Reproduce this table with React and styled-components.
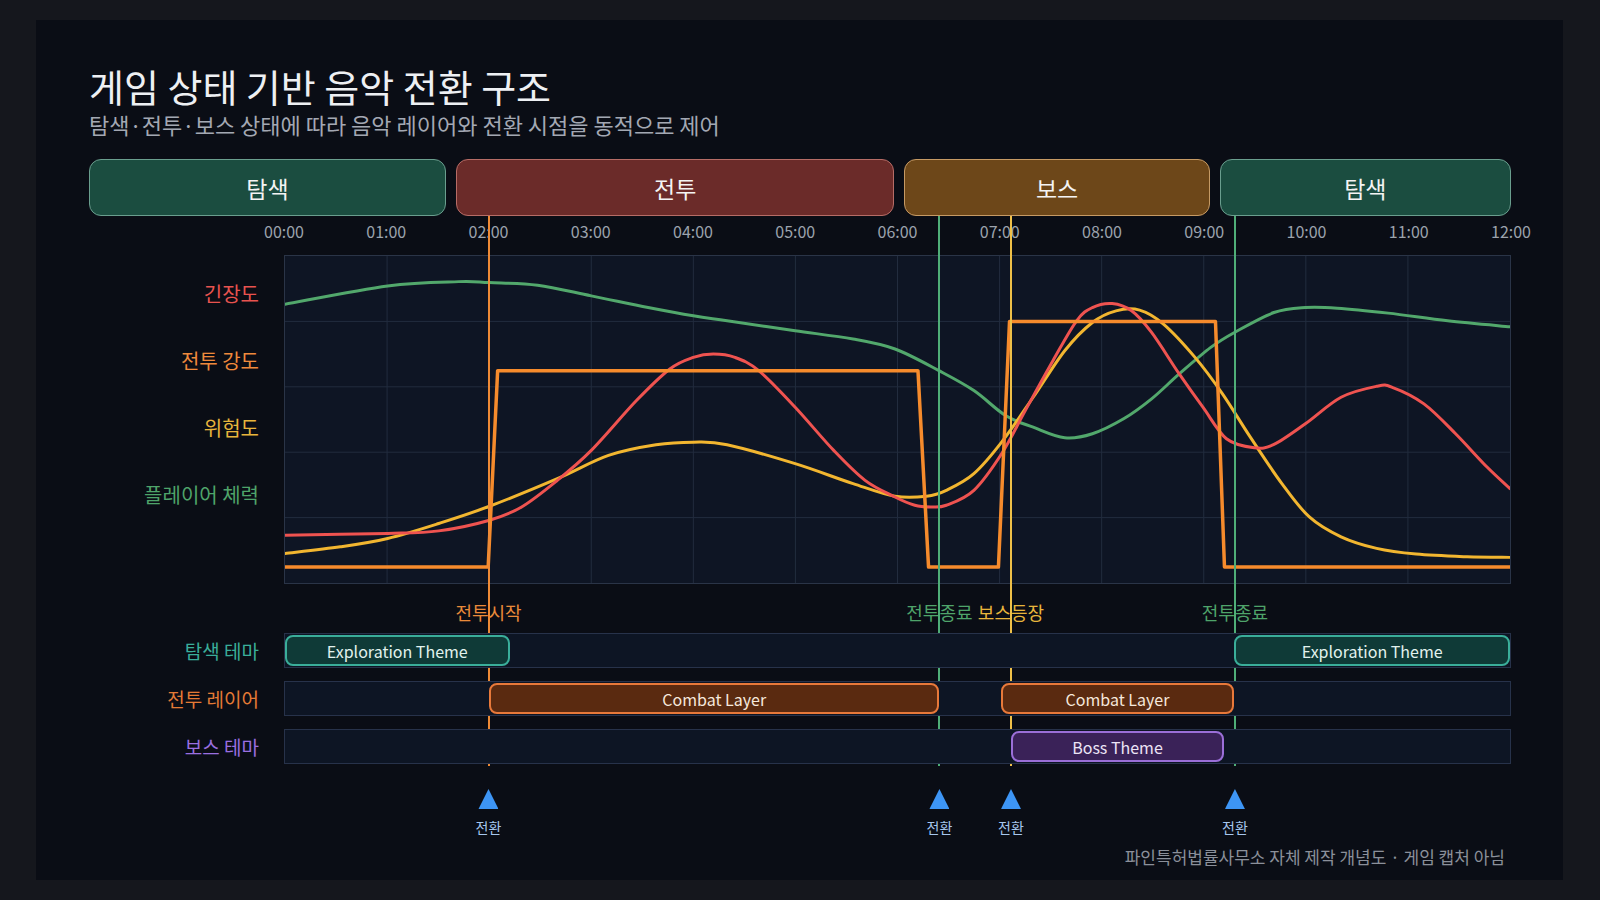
import React from "react";
import styled, { createGlobalStyle } from "styled-components";

// timeline spans 12 hours across the track
const HOURS = 12;
const PLOT_W = 1227;
const PLOT_H = 328;

const pct = (h) => `${(h / HOURS) * 100}%`;

const GlobalStyle = createGlobalStyle`
  html, body {
    margin: 0;
    padding: 0;
    background: #15171d;
  }
  body {
    font-family: "Noto Sans CJK KR", "Noto Sans", sans-serif;
  }
  * {
    box-sizing: border-box;
  }
`;

const tones = {
  explore: { bg: "#1b4d40", border: "#6a9e8e" },
  combat: { bg: "#6b2b29", border: "#b66c66" },
  boss: { bg: "#6d4719", border: "#c69a64" },
};

const blockTones = {
  explore: { bg: "#0f3a37", border: "#3aae9a", text: "#e2f2ee" },
  combat: { bg: "#5a2a10", border: "#e8793a", text: "#f6e8dc" },
  boss: { bg: "#3a2258", border: "#9b6fd8", text: "#ece4f6" },
};

const states = [
  { label: "탐색", grow: 357, tone: "explore" },
  { label: "전투", grow: 439, tone: "combat" },
  { label: "보스", grow: 305, tone: "boss" },
  { label: "탐색", grow: 291, tone: "explore" },
];

const yLabels = [
  { text: "긴장도", color: "#e8534f" },
  { text: "전투 강도", color: "#ef8a3c" },
  { text: "위험도", color: "#e8b53c" },
  { text: "플레이어 체력", color: "#4fa46a" },
];

// transition points (hours) with their marker colours
const markers = [
  { at: 2.0, color: "#ee8a36" },
  { at: 6.41, color: "#4fae78" },
  { at: 7.11, color: "#efc048" },
  { at: 9.3, color: "#4fae78" },
];

const events = [
  { at: 2.0, text: "전투시작", color: "#ea8a3a" },
  { at: 6.41, text: "전투종료", color: "#4fa46a" },
  { at: 7.11, text: "보스등장", color: "#e8b53c" },
  { at: 9.3, text: "전투종료", color: "#4fa46a" },
];

const lanes = [
  {
    label: "탐색 테마",
    color: "#3aae9a",
    blocks: [
      { from: 0, to: 2.2, text: "Exploration Theme", tone: "explore" },
      { from: 9.3, to: 12, text: "Exploration Theme", tone: "explore" },
    ],
  },
  {
    label: "전투 레이어",
    color: "#e47a35",
    blocks: [
      { from: 2.0, to: 6.41, text: "Combat Layer", tone: "combat" },
      { from: 7.01, to: 9.3, text: "Combat Layer", tone: "combat" },
    ],
  },
  {
    label: "보스 테마",
    color: "#9a6fe0",
    blocks: [{ from: 7.11, to: 9.2, text: "Boss Theme", tone: "boss" }],
  },
];

// curve samples in plot pixels (x across 1227, y down 328)
const health = [
  [0, 48.3], [102.8, 30], [174, 25.7], [204.8, 26.7], [253, 29.3], [306.8, 40],
  [363.7, 51.7], [409, 60], [442.8, 65], [511, 75], [569, 83.3], [611, 93.3],
  [655, 115], [690, 135], [721.7, 160], [749.4, 171.7], [781, 182.3], [808.7, 178.3],
  [840, 163.3], [868, 143.3], [895.7, 118.3], [927.3, 91.7], [951, 76.7], [990.6, 56.7],
  [1022, 51.7], [1053.9, 52.3], [1105, 57.3], [1164.6, 65], [1227, 71],
];

const tension = [
  [0, 280], [102.8, 278.3], [154, 275.7], [204.8, 265], [237, 251.7], [272.8, 225],
  [306.8, 195], [352, 145], [385.5, 113.3], [409, 101.7], [429, 98.3], [450.7, 101.7],
  [474.5, 115], [511, 151.7], [549.6, 195], [581, 225], [611, 241.7], [630.8, 250],
  [646.6, 251.7], [662.4, 250], [690, 235], [717.8, 198.3], [741.5, 155], [769.2, 105],
  [792.9, 65], [808.7, 51.7], [828.5, 47.7], [848, 55], [868, 76.7], [895.7, 118.3],
  [919.4, 151.7], [943, 183.3], [970.8, 192.3], [990.6, 189], [1022, 168.3],
  [1057.8, 141.7], [1093.4, 130.7], [1109, 131.7], [1140.8, 148.3], [1172.5, 178.3],
  [1204, 211.7], [1227, 233.3],
];

const danger = [
  [0, 298.3], [55.3, 291.7], [102.8, 283.3], [154, 268.3], [204.8, 251], [272.8, 223.3],
  [324, 200], [371.6, 189.3], [409, 186.7], [442.8, 189.3], [511, 208.3], [569, 228.3],
  [611, 241], [642.6, 241], [662.4, 235], [690, 218.3], [717.8, 186.7], [749.4, 141.7],
  [781, 95], [808.7, 66.7], [832.4, 55], [856, 54.3], [879.9, 68.3], [911.5, 101.7],
  [939, 138.3], [966.9, 181.7], [998.5, 228.3], [1026, 261.7], [1057.8, 281.7],
  [1093.4, 293.3], [1133, 299], [1184, 301.7], [1227, 302.3],
];

const intensity =
  "M0,312 L203.5,312 L213,115 L634,115 L644.6,312 L714.6,312 L725.7,65.7 L932,65.7 L941,312 L1227,312";

// catmull-rom through the samples, written out as cubic beziers
function smoothPath(pts) {
  let d = `M${pts[0][0]},${pts[0][1]}`;
  for (let i = 0; i < pts.length - 1; i++) {
    const p0 = pts[i - 1] || pts[i];
    const p1 = pts[i];
    const p2 = pts[i + 1];
    const p3 = pts[i + 2] || p2;
    const c1x = p1[0] + (p2[0] - p0[0]) / 6;
    const c1y = p1[1] + (p2[1] - p0[1]) / 6;
    const c2x = p2[0] - (p3[0] - p1[0]) / 6;
    const c2y = p2[1] - (p3[1] - p1[1]) / 6;
    d += ` C${c1x.toFixed(1)},${c1y.toFixed(1)} ${c2x.toFixed(1)},${c2y.toFixed(1)} ${p2[0]},${p2[1]}`;
  }
  return d;
}

function Chart() {
  const hourLines = [];
  for (let i = 1; i < HOURS; i++) {
    const x = (PLOT_W / HOURS) * i;
    hourLines.push(<line key={"v" + i} x1={x} y1={0} x2={x} y2={PLOT_H} />);
  }
  const rowLines = [];
  for (let k = 1; k < 5; k++) {
    const y = (PLOT_H / 5) * k;
    rowLines.push(<line key={"h" + k} x1={0} y1={y} x2={PLOT_W} y2={y} />);
  }
  return (
    <svg
      width="100%"
      height="100%"
      viewBox={`0 0 ${PLOT_W} ${PLOT_H}`}
      preserveAspectRatio="none"
    >
      <g stroke="#222c3e" strokeWidth="1">
        {hourLines}
        {rowLines}
      </g>
      <g fill="none" strokeLinejoin="round" strokeLinecap="round">
        <path d={smoothPath(health)} stroke="#52a86c" strokeWidth="3" />
        <path d={smoothPath(danger)} stroke="#f2b630" strokeWidth="3" />
        <path d={smoothPath(tension)} stroke="#ef5350" strokeWidth="3" />
        <path d={intensity} stroke="#f68b2c" strokeWidth="3.5" />
      </g>
    </svg>
  );
}

function App() {
  const times = [];
  for (let i = 0; i <= HOURS; i++) {
    times.push(`${String(i).padStart(2, "0")}:00`);
  }

  return (
    <Page>
      <GlobalStyle />
      <Panel>
        <Title>게임 상태 기반 음악 전환 구조</Title>
        <Subtitle>탐색·전투·보스 상태에 따라 음악 레이어와 전환 시점을 동적으로 제어</Subtitle>

        <StateRow>
          {states.map((s, i) => (
            <StateBlock key={i} $tone={s.tone} $grow={s.grow}>
              {s.label}
            </StateBlock>
          ))}
        </StateRow>

        <ChartSection>
          {/* vertical transition markers sit over the plot but under the lanes */}
          <MarkerOverlay>
            {markers.map((m, i) => (
              <MarkerLine key={i} $color={m.color} style={{ left: pct(m.at) }} />
            ))}
          </MarkerOverlay>

          <Row $mt={0}>
            <LabelCell />
            <Track>
              <TimeAxis>
                {times.map((t) => (
                  <TimeLabel key={t}>{t}</TimeLabel>
                ))}
              </TimeAxis>
            </Track>
          </Row>

          <Row $mt={14}>
            <LabelCell>
              <YLabels>
                {yLabels.map((l) => (
                  <YLabel key={l.text} $color={l.color}>
                    {l.text}
                  </YLabel>
                ))}
              </YLabels>
            </LabelCell>
            <Track>
              <Plot>
                <Chart />
              </Plot>
            </Track>
          </Row>

          <Row $mt={17}>
            <LabelCell />
            <Track>
              <EventTrack>
                {events.map((e, i) => (
                  <EventLabel key={i} $color={e.color} style={{ left: pct(e.at) }}>
                    {e.text}
                  </EventLabel>
                ))}
              </EventTrack>
            </Track>
          </Row>

          {lanes.map((lane, i) => (
            <Row key={lane.label} $mt={i === 0 ? 10 : 13}>
              <LabelCell>
                <LaneLabel $color={lane.color}>{lane.label}</LaneLabel>
              </LabelCell>
              <Track>
                <Lane>
                  {lane.blocks.map((b, j) => (
                    <LaneBlock
                      key={j}
                      $tone={b.tone}
                      style={{ left: pct(b.from), width: pct(b.to - b.from) }}
                    >
                      {b.text}
                    </LaneBlock>
                  ))}
                </Lane>
              </Track>
            </Row>
          ))}

          <Row $mt={25}>
            <LabelCell />
            <Track>
              <TransitionTrack>
                {markers.map((m, i) => (
                  <Transition key={i} style={{ left: pct(m.at) }}>
                    <Triangle />
                    <TransitionText>전환</TransitionText>
                  </Transition>
                ))}
              </TransitionTrack>
            </Track>
          </Row>
        </ChartSection>

        <Footer>파인특허법률사무소 자체 제작 개념도 · 게임 캡처 아님</Footer>
      </Panel>
    </Page>
  );
}

export default App;

const Page = styled.div`
  width: 1600px;
  height: 900px;
  padding: 20px 37px 20px 36px;
  background: #15171d;
`;

const Panel = styled.div`
  height: 100%;
  background: #0a0d15;
  padding: 42px 52px 0 53px;
  display: flex;
  flex-direction: column;
`;

const Title = styled.h1`
  margin: 0;
  font-size: 38px;
  line-height: 48px;
  font-weight: 400;
  color: #eef0f3;
`;

const Subtitle = styled.p`
  margin: 0;
  font-size: 22px;
  line-height: 28px;
  color: #a3a8b3;
`;

const StateRow = styled.div`
  display: flex;
  gap: 10px;
  height: 57px;
  margin-top: 21px;
`;

const StateBlock = styled.div`
  flex: ${(props) => props.$grow} 1 0;
  display: flex;
  align-items: center;
  justify-content: center;
  background: ${(props) => tones[props.$tone].bg};
  border: 1.5px solid ${(props) => tones[props.$tone].border};
  border-radius: 12px;
  color: #f4f4f4;
  font-size: 23px;
`;

const ChartSection = styled.div`
  position: relative;
  margin-top: 5px;
`;

const MarkerOverlay = styled.div`
  position: absolute;
  top: -5px;
  left: 195px;
  right: 0;
  height: 550px;
  z-index: 1;
  pointer-events: none;
`;

const MarkerLine = styled.div`
  position: absolute;
  top: 0;
  bottom: 0;
  width: 2px;
  margin-left: -1px;
  background: ${(props) => props.$color};
`;

const Row = styled.div`
  display: flex;
  gap: 25px;
  margin-top: ${(props) => props.$mt}px;
`;

const LabelCell = styled.div`
  width: 170px;
  flex: none;
  display: flex;
  align-items: center;
  justify-content: flex-end;
`;

const Track = styled.div`
  flex: 1;
  position: relative;
`;

const TimeAxis = styled.div`
  display: flex;
  justify-content: space-between;
  margin: 0 -30px;
  height: 20px;
`;

const TimeLabel = styled.span`
  width: 60px;
  text-align: center;
  font-size: 16px;
  line-height: 20px;
  color: #9ca3ad;
`;

const Plot = styled.div`
  height: 329px;
  background: #0e1524;
  border: 1px solid #2a3447;
  display: flex;
`;

const YLabels = styled.div`
  display: flex;
  flex-direction: column;
  align-items: flex-end;
  align-self: flex-start;
  padding-top: 5px;
`;

const YLabel = styled.div`
  height: 67px;
  line-height: 67px;
  font-size: 20px;
  color: ${(props) => props.$color};
`;

const EventTrack = styled.div`
  position: relative;
  height: 22px;
`;

const EventLabel = styled.span`
  position: absolute;
  top: 0;
  transform: translateX(-50%);
  font-size: 18px;
  line-height: 22px;
  white-space: nowrap;
  color: ${(props) => props.$color};
`;

const LaneLabel = styled.span`
  font-size: 19px;
  line-height: 22px;
  color: ${(props) => props.$color};
`;

const Lane = styled.div`
  position: relative;
  z-index: 2;
  height: 35px;
  background: #0d1524;
  border: 1px solid #27324a;
`;

const LaneBlock = styled.div`
  position: absolute;
  top: 1px;
  bottom: 1px;
  display: flex;
  align-items: center;
  justify-content: center;
  background: ${(props) => blockTones[props.$tone].bg};
  border: 2px solid ${(props) => blockTones[props.$tone].border};
  border-radius: 8px;
  color: ${(props) => blockTones[props.$tone].text};
  font-size: 16px;
  white-space: nowrap;
`;

const TransitionTrack = styled.div`
  position: relative;
  height: 46px;
`;

const Transition = styled.div`
  position: absolute;
  top: 0;
  transform: translateX(-50%);
  display: flex;
  flex-direction: column;
  align-items: center;
`;

const Triangle = styled.div`
  width: 20px;
  height: 20px;
  background: #3d95f5;
  clip-path: polygon(50% 0, 100% 100%, 0 100%);
`;

const TransitionText = styled.span`
  margin-top: 10px;
  font-size: 14px;
  line-height: 16px;
  color: #a6c6ee;
`;

const Footer = styled.div`
  margin-top: 11px;
  margin-right: 6px;
  text-align: right;
  font-size: 17px;
  line-height: 22px;
  color: #8b909a;
`;
